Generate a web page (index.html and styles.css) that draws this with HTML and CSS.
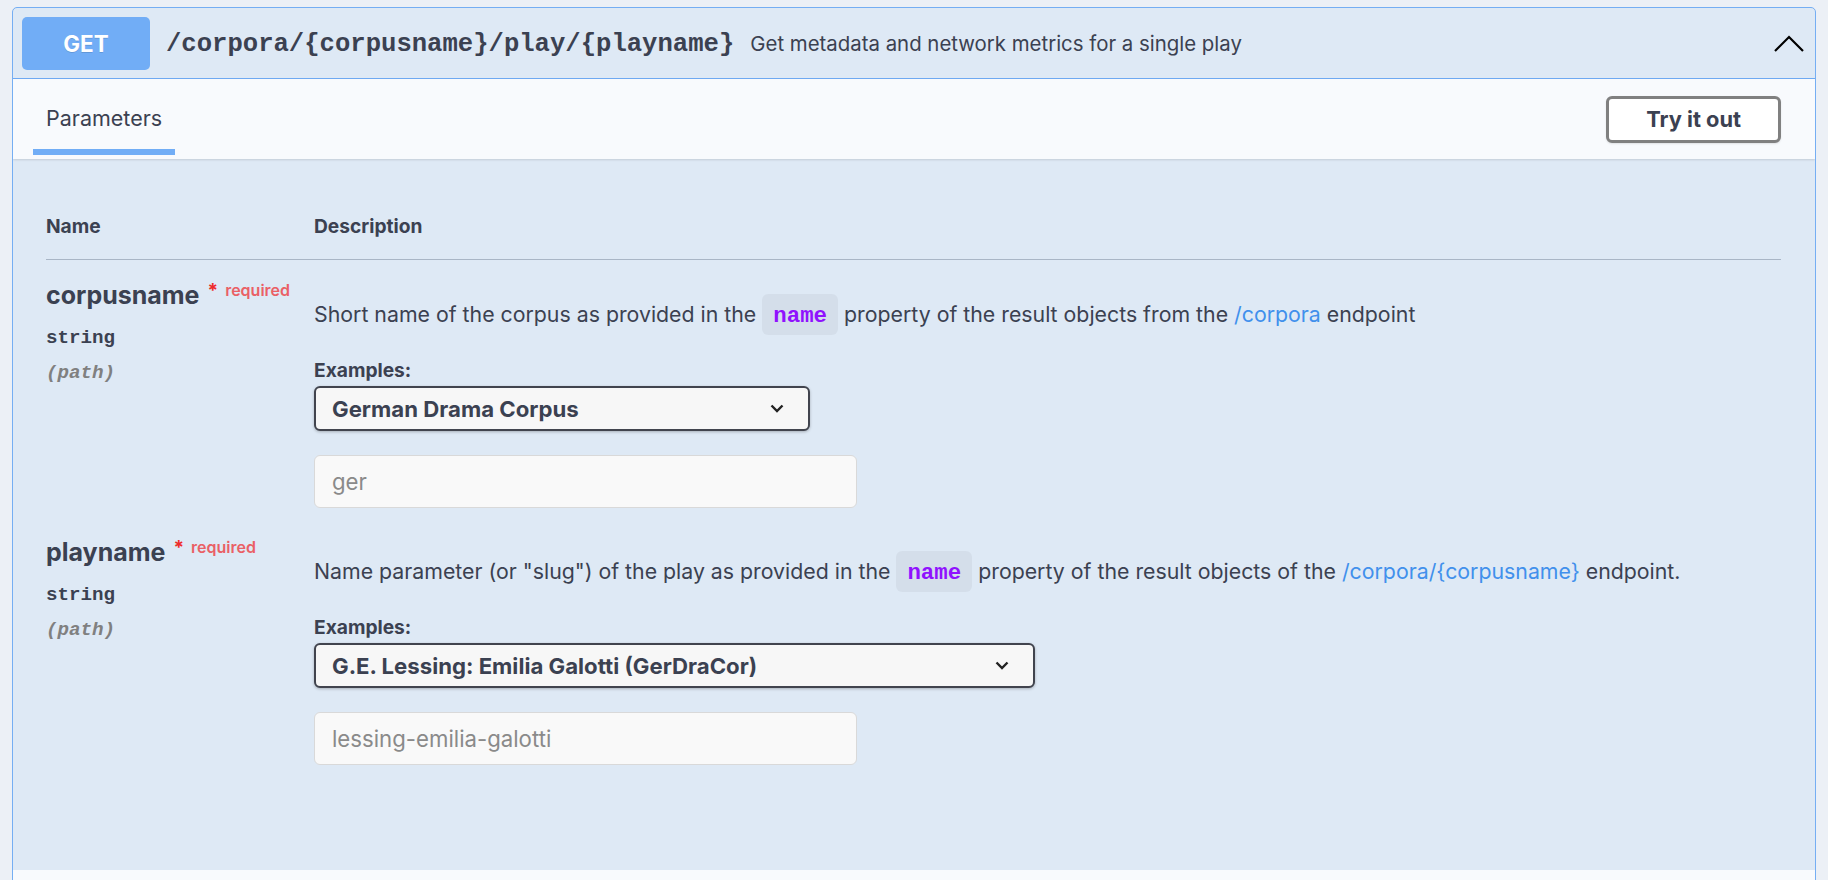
FILE: index.html
```html
<!DOCTYPE html>
<html lang="en">
<head>
<meta charset="utf-8">
<title>GET /corpora/{corpusname}/play/{playname}</title>
<link rel="stylesheet" href="styles.css">
</head>
<body>
<div class="page">
  <div class="opblock">
    <div class="summary">
      <span class="method">GET</span>
      <span class="path">/corpora/{corpusname}/play/{playname}</span>
      <span class="summary-desc">Get metadata and network metrics for a single play</span>
      <svg class="arrow" width="30" height="17" viewBox="0 0 30 17"><path d="M1 16 L15 2 L29 16" fill="none" stroke="#000" stroke-width="2.2"/></svg>
    </div>
    <div class="tab-header">
      <div class="tab">
        <span class="tab-label">Parameters</span>
        <span class="tab-bar"></span>
      </div>
      <button class="try">Try it out</button>
    </div>
    <div class="params">
      <div class="thead">
        <div class="th">Name</div>
        <div class="th">Description</div>
      </div>
      <div class="prow">
        <div class="pcol-name">
          <div class="pname">corpusname<span class="star">*</span><span class="req">required</span></div>
          <div class="ptype">string</div>
          <div class="pin">(path)</div>
        </div>
        <div class="pcol-desc">
          <p class="pdesc">Short name of the corpus as provided in the <code class="code">name</code> property of the result objects from the <a class="link" href="#">/corpora</a> endpoint</p>
          <div class="ex-label">Examples:</div>
          <div class="select select-1">
            <span class="select-text">German Drama Corpus</span>
            <svg class="select-arrow" width="14" height="9" viewBox="0 0 14 9"><path d="M1.5 1.5 L7 7 L12.5 1.5" fill="none" stroke="#222" stroke-width="2.4"/></svg>
          </div>
          <div class="input">ger</div>
        </div>
      </div>
      <div class="prow">
        <div class="pcol-name">
          <div class="pname">playname<span class="star">*</span><span class="req">required</span></div>
          <div class="ptype">string</div>
          <div class="pin">(path)</div>
        </div>
        <div class="pcol-desc">
          <p class="pdesc">Name parameter (or "slug") of the play as provided in the <code class="code">name</code> property of the result objects of the <a class="link" href="#">/corpora/{corpusname}</a> endpoint.</p>
          <div class="ex-label">Examples:</div>
          <div class="select select-2">
            <span class="select-text">G.E. Lessing: Emilia Galotti (GerDraCor)</span>
            <svg class="select-arrow" width="14" height="9" viewBox="0 0 14 9"><path d="M1.5 1.5 L7 7 L12.5 1.5" fill="none" stroke="#222" stroke-width="2.4"/></svg>
          </div>
          <div class="input">lessing-emilia-galotti</div>
        </div>
      </div>
    </div>
    <div class="responses"></div>
  </div>
</div>
</body>
</html>
```
FILE: styles.css
```css
html, body {
  margin: 0;
  padding: 0;
  background: #ecf0f6;
  height: 100%;
  overflow: hidden;
}
body {
  font-family: Inter, "Noto Sans", sans-serif;
  color: #3b4151;
}
.page {
  padding: 7px 12px 0 12px;
}
.opblock {
  border: 1px solid #75aef3;
  border-radius: 5px;
  background: #dee9f5;
  overflow: hidden;
}
.summary {
  display: flex;
  align-items: center;
  padding: 9px 11px 8px 9px;
  border-bottom: 1px solid #6fabf4;
}
.method {
  width: 128px;
  height: 53px;
  flex: none;
  display: flex;
  align-items: center;
  justify-content: center;
  background: #71adf6;
  border-radius: 5px;
  color: #fff;
  font-weight: 700;
  font-size: 22.4px;
  text-shadow: 0 1px 0 rgba(0,0,0,.12);
}
.path {
  margin-left: 16px;
  padding-right: 16px;
  font-family: "Liberation Mono", monospace;
  font-weight: 700;
  font-size: 25.6px;
  color: #3b4151;
  position: relative;
  top: 1px;
}
.summary-desc {
  flex: 1;
  font-size: 20.4px;
  color: #3b4151;
}
.arrow {
  flex: none;
  display: block;
}
.tab-header {
  display: flex;
  justify-content: space-between;
  align-items: flex-start;
  height: 80px;
  padding: 0 34px 0 20px;
  background: #f8fafd;
  box-shadow: 0 1px 2px rgba(0,0,0,.12);
  position: relative;
}
.tab {
  display: flex;
  flex-direction: column;
  padding-top: 25px;
}
.tab-label {
  font-size: 21.5px;
  line-height: 28px;
  padding: 0 13px;
  color: #3b4151;
}
.tab-bar {
  display: block;
  height: 6px;
  margin-top: 17px;
  background: #71adf6;
}
.try {
  align-self: center;
  height: 47px;
  padding: 0 37px;
  border: 3px solid #808080;
  border-radius: 6px;
  background: #fff;
  font-family: Inter, sans-serif;
  font-weight: 700;
  font-size: 21.8px;
  color: #3b4151;
  box-shadow: 0 1px 2px rgba(0,0,0,.1);
  margin-top: 0;
}
.params {
  padding: 55px 34px 96px 33px;
}
.thead {
  display: grid;
  grid-template-columns: 268px 1fr;
  padding-bottom: 21px;
  border-bottom: 1px solid #a9b6c6;
}
.th {
  font-weight: 700;
  font-size: 19.2px;
  line-height: 24px;
}
.prow {
  display: grid;
  grid-template-columns: 268px 1fr;
  height: 257px;
}
.pcol-name {
  display: flex;
  flex-direction: column;
  align-items: flex-start;
}
.pname {
  margin-top: 15px;
  font-weight: 700;
  font-size: 25px;
  line-height: 30px;
}
.star {
  color: #ee2b2b;
  font-size: 19px;
  font-weight: 700;
  vertical-align: 7px;
  margin-left: 8px;
}
.req {
  color: #ea6065;
  font-size: 16px;
  font-weight: 600;
  vertical-align: 8px;
  margin-left: 7px;
}
.ptype {
  margin-top: 16px;
  font-family: "Liberation Mono", monospace;
  font-weight: 700;
  font-size: 19.2px;
  line-height: 24px;
}
.pin {
  margin-top: 11px;
  font-family: "Liberation Mono", monospace;
  font-weight: 700;
  font-style: italic;
  font-size: 19.2px;
  line-height: 24px;
  color: #808080;
}
.pcol-desc {
  display: flex;
  flex-direction: column;
  align-items: flex-start;
}
.pdesc {
  margin: 37.5px 0 0 0;
  font-size: 21.3px;
  line-height: 32px;
}
.code {
  font-family: "Liberation Mono", monospace;
  font-weight: 700;
  font-size: 22.4px;
  color: #9012fe;
  background: rgba(0,0,0,.045);
  border-radius: 6px;
  padding: 9px 11px 6.5px;
}
.link {
  color: #4190ec;
  text-decoration: none;
}
.ex-label {
  margin-top: 26.5px;
  font-weight: 700;
  font-size: 19.2px;
  line-height: 24px;
}
.select {
  margin-top: 4px;
  height: 45px;
  box-sizing: border-box;
  border: 2px solid #41444e;
  border-radius: 6px;
  background: #f7f7f7;
  box-shadow: 0 1px 3px rgba(0,0,0,.25);
  display: flex;
  align-items: center;
  justify-content: space-between;
  padding: 0 24px 0 16px;
  position: relative;
}
.select-1 { width: 496px; }
.select-2 { width: 721px; }
.select-text {
  font-weight: 700;
  font-size: 22.2px;
  color: #3b4151;
}
.select-arrow {
  display: block;
}
.input {
  margin-top: 24px;
  width: 543px;
  height: 53px;
  box-sizing: border-box;
  border: 1px solid #d9d9d9;
  border-radius: 6px;
  background: #f9f9f9;
  padding: 0 17px;
  display: flex;
  align-items: center;
  font-size: 22.2px;
  color: #8a8a8a;
}
.responses {
  height: 80px;
  background: #f8fafd;
}
```
